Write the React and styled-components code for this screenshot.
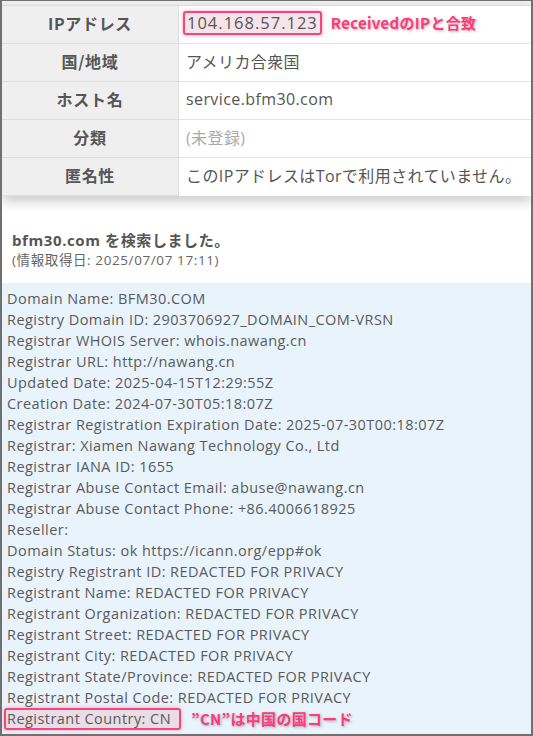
import React from "react";
import styled, { createGlobalStyle } from "styled-components";

const Global = createGlobalStyle`
  html, body { margin: 0; padding: 0; background: #fff; }
  body { font-family: "Open Sans", "Noto Sans CJK JP", sans-serif; }
`;

const Frame = styled.div`
  width: 533px;
  height: 736px;
  box-sizing: border-box;
  border: 2px solid #707070;
  border-top-width: 1px;
  overflow: hidden;
  background: #fff;
  display: flex;
  flex-direction: column;
`;

const TopStrip = styled.div`
  height: 4px;
  background: #f2f2f2;
`;

const Table = styled.div`
  display: grid;
  grid-template-columns: 177px 1fr;
  border-top: 1px solid #dcdcdc;
  box-shadow: 0 5px 12px rgba(0, 0, 0, 0.22);
  position: relative;
  z-index: 1;
`;

const Label = styled.div`
  height: 38px;
  box-sizing: border-box;
  padding-bottom: 4px;
  display: flex;
  align-items: center;
  justify-content: center;
  background: #efefef;
  border-right: 1px solid #dedede;
  border-bottom: 1px solid #dedede;
  font-family: "Noto Sans CJK JP", sans-serif;
  font-weight: 700;
  font-size: 16px;
  letter-spacing: 0.7px;
  color: #555;
`;

const Value = styled.div`
  height: 38px;
  box-sizing: border-box;
  padding: 0 0 4px 7px;
  display: flex;
  align-items: center;
  background: #fff;
  border-bottom: ${(p) => (p.$last ? "none" : "1px solid #e4e4e4")};
  font-family: "Open Sans", "Noto Sans CJK JP", sans-serif;
  font-size: 16px;
  letter-spacing: 0.4px;
  color: ${(p) => (p.$muted ? "#aaa" : "#555")};
  white-space: nowrap;
`;

const IpBox = styled.span`
  display: inline-block;
  margin-left: -3px;
  padding: 0 2px;
  line-height: 20px;
  font-size: 16.5px;
  letter-spacing: 1px;
  border: 2px solid #f2467c;
  border-radius: 3px;
  background: #f5e4ea;
  box-shadow: 0 0 4px rgba(240, 60, 110, 0.45);
`;

const Note = styled.span`
  margin-left: ${(p) => p.$ml || 10}px;
  font-family: "Noto Sans CJK JP", sans-serif;
  font-weight: 700;
  font-size: 15px;
  letter-spacing: 0.3px;
  color: #ff3a7a;
  text-shadow: 1px 1px 3px rgba(0, 0, 0, 0.3);
  white-space: nowrap;
`;

const Heading = styled.div`
  padding: 34px 0 0 10px;
`;

const Title = styled.div`
  font-family: "Open Sans", "Noto Sans CJK JP", sans-serif;
  font-weight: 700;
  font-size: 15px;
  letter-spacing: 0.6px;
  line-height: 20px;
  color: #555;
`;

const Sub = styled.div`
  font-family: "Open Sans", "Noto Sans CJK JP", sans-serif;
  font-size: 13.5px;
  letter-spacing: 0.6px;
  line-height: 21px;
  color: #666;
`;

const Whois = styled.div`
  margin-top: 12px;
  flex: 1;
  background: #e8f3fc;
  padding: 5px 5px 0 5px;
`;

const Line = styled.div`
  display: flex;
  align-items: center;
  height: 21px;
  font-family: "Open Sans", "Noto Sans CJK JP", sans-serif;
  font-size: 14.5px;
  letter-spacing: 0.45px;
  color: #5a5a5a;
  white-space: nowrap;
`;

const LineBox = styled.span`
  display: inline-block;
  margin-left: -3px;
  width: 172px;
  height: 18px;
  line-height: 18px;
  padding-left: 1px;
  border: 2px solid #f2467c;
  border-radius: 3px;
  background: #e9dde6;
  box-shadow: 0 0 4px rgba(240, 60, 110, 0.4);
`;

const rows = [
  { label: "IPアドレス", value: "ip" },
  { label: "国/地域", value: "アメリカ合衆国" },
  { label: "ホスト名", value: "service.bfm30.com" },
  { label: "分類", value: "(未登録)", muted: true },
  { label: "匿名性", value: "このIPアドレスはTorで利用されていません。", last: true },
];

const whois = [
  "Domain Name: BFM30.COM",
  "Registry Domain ID: 2903706927_DOMAIN_COM-VRSN",
  "Registrar WHOIS Server: whois.nawang.cn",
  "Registrar URL: http://nawang.cn",
  "Updated Date: 2025-04-15T12:29:55Z",
  "Creation Date: 2024-07-30T05:18:07Z",
  "Registrar Registration Expiration Date: 2025-07-30T00:18:07Z",
  "Registrar: Xiamen Nawang Technology Co., Ltd",
  "Registrar IANA ID: 1655",
  "Registrar Abuse Contact Email: abuse@nawang.cn",
  "Registrar Abuse Contact Phone: +86.4006618925",
  "Reseller:",
  "Domain Status: ok https://icann.org/epp#ok",
  "Registry Registrant ID: REDACTED FOR PRIVACY",
  "Registrant Name: REDACTED FOR PRIVACY",
  "Registrant Organization: REDACTED FOR PRIVACY",
  "Registrant Street: REDACTED FOR PRIVACY",
  "Registrant City: REDACTED FOR PRIVACY",
  "Registrant State/Province: REDACTED FOR PRIVACY",
  "Registrant Postal Code: REDACTED FOR PRIVACY",
];

export default function App() {
  return (
    <>
      <Global />
      <Frame>
        <TopStrip />
        <Table>
          {rows.map((r) => (
            <React.Fragment key={r.label}>
              <Label>{r.label}</Label>
              <Value $muted={r.muted} $last={r.last}>
                {r.value === "ip" ? (
                  <>
                    <IpBox>104.168.57.123</IpBox>
                    <Note $ml={9}>ReceivedのIPと合致</Note>
                  </>
                ) : (
                  r.value
                )}
              </Value>
            </React.Fragment>
          ))}
        </Table>
        <Heading>
          <Title>bfm30.com を検索しました。</Title>
          <Sub>(情報取得日: 2025/07/07 17:11)</Sub>
        </Heading>
        <Whois>
          {whois.map((l) => (
            <Line key={l}>{l}</Line>
          ))}
          <Line>
            <LineBox>Registrant Country: CN</LineBox>
            <Note $ml={10}>”CN”は中国の国コード</Note>
          </Line>
        </Whois>
      </Frame>
    </>
  );
}
